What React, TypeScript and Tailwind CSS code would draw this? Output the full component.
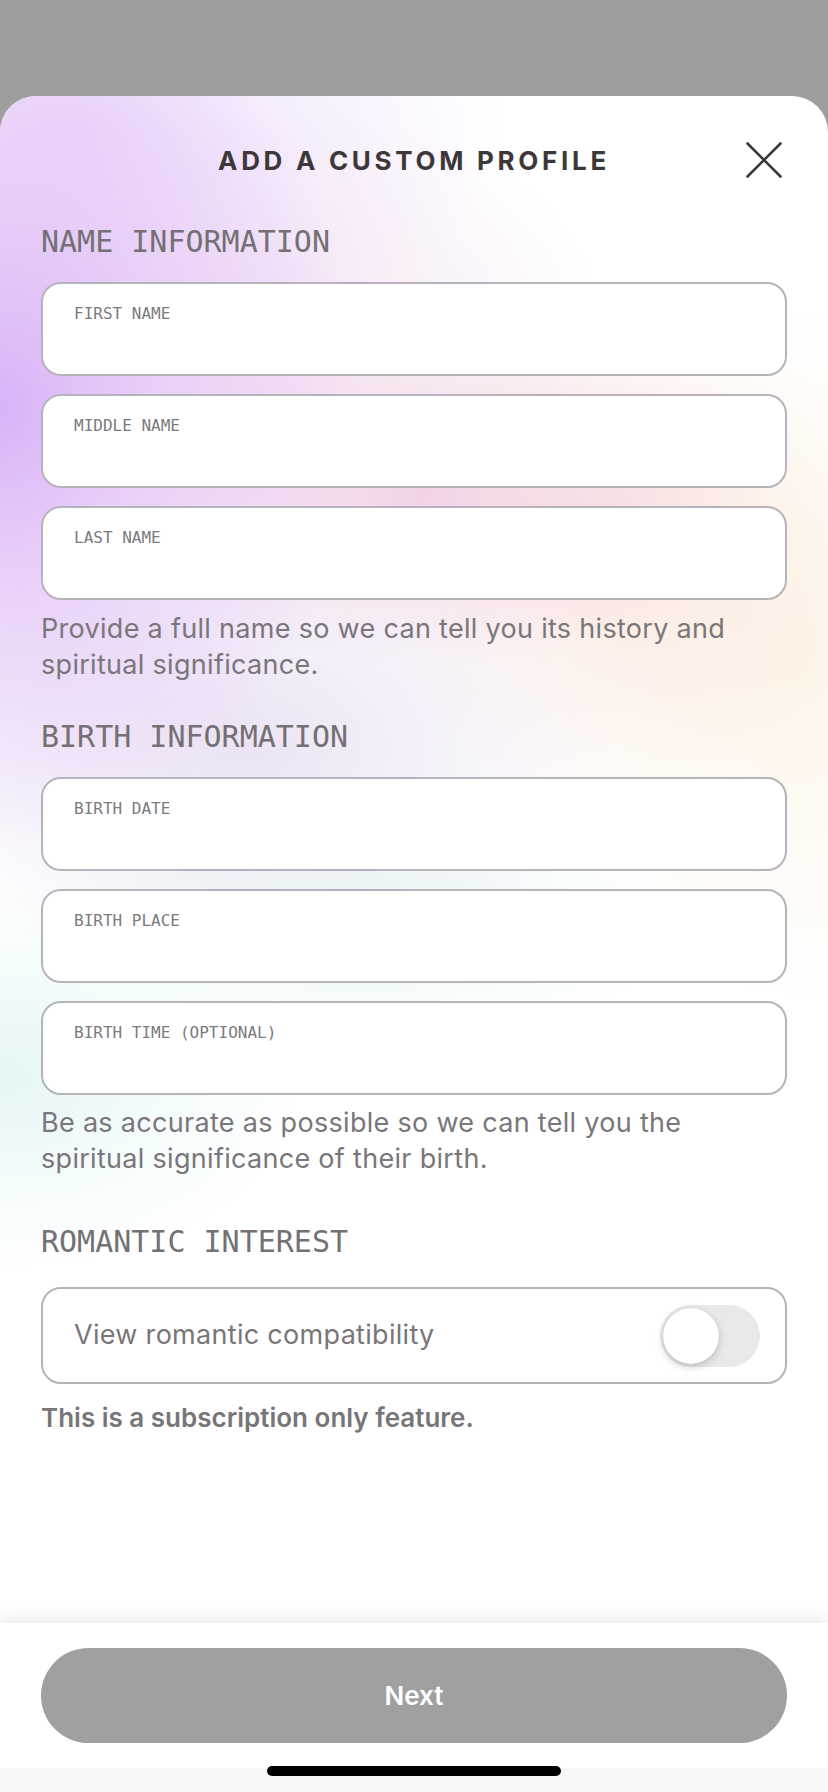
import React from "react";

const mono = "font-['DejaVu_Sans_Mono','Liberation_Mono',monospace]";
const sans = "font-['Inter','Noto_Sans',sans-serif]";

type FieldProps = { label: string };

function Field({ label }: FieldProps) {
  return (
    <div className="h-[94px] rounded-[20px] border-2 border-[#b6b3ba] bg-white pl-[31px] pt-[20px]">
      <span className={`${mono} block text-[16px] leading-[20px] text-[#7b7a7d]`}>{label}</span>
    </div>
  );
}

function SectionTitle({ children, className = "" }: { children: React.ReactNode; className?: string }) {
  return (
    <h2 className={`${mono} text-[30px] leading-[36px] font-normal text-[#747073] ${className}`}>{children}</h2>
  );
}

function Helper({ children, className = "" }: { children: React.ReactNode; className?: string }) {
  return (
    <p className={`${sans} text-[27px] leading-[36px] tracking-[0.3px] text-[#7a767a] ${className}`}>{children}</p>
  );
}

export default function App() {
  return (
    <div className="flex h-[1792px] w-[828px] flex-col bg-[#9e9e9e] pt-[96px]">
      <div className="flex flex-1 flex-col overflow-hidden rounded-t-[36px] bg-white">
        <div className="flex-1 bg-[radial-gradient(ellipse_360px_440px_at_0px_310px,#d9b2f7_0%,rgba(222,186,247,0.6)_45%,rgba(255,255,255,0)_100%),radial-gradient(ellipse_340px_170px_at_420px_400px,rgba(240,204,226,0.85)_0%,rgba(255,255,255,0)_100%),radial-gradient(ellipse_240px_260px_at_620px_450px,rgba(250,228,218,0.8)_0%,rgba(255,255,255,0)_100%),radial-gradient(ellipse_260px_340px_at_800px_560px,rgba(253,244,230,0.95)_0%,rgba(255,255,255,0)_100%),radial-gradient(ellipse_420px_240px_at_80px_30px,rgba(236,218,250,0.9)_0%,rgba(255,255,255,0)_100%),radial-gradient(ellipse_320px_220px_at_280px_230px,rgba(240,218,238,0.7)_0%,rgba(255,255,255,0)_100%),radial-gradient(ellipse_300px_190px_at_0px_980px,rgba(228,246,246,0.95)_0%,rgba(255,255,255,0)_100%),radial-gradient(ellipse_320px_110px_at_360px_830px,rgba(226,243,243,0.85)_0%,rgba(255,255,255,0)_100%),radial-gradient(ellipse_380px_240px_at_240px_650px,rgba(232,222,242,0.85)_0%,rgba(255,255,255,0)_100%)] px-[41px]">
          <div className="relative flex h-[128px] items-center justify-center">
            <h1 className={`${sans} text-[26px] font-bold tracking-[3.7px] text-[#3c3839]`}>ADD A CUSTOM PROFILE</h1>
            <button className="absolute right-[5px] top-[46px] h-[36px] w-[36px]" aria-label="Close">
              <svg viewBox="0 0 36 36" className="h-[36px] w-[36px]" fill="none" stroke="#3c3839" strokeWidth="2.6" strokeLinecap="round">
                <path d="M1.5 1.5 L34.5 34.5" />
                <path d="M34.5 1.5 L1.5 34.5" />
              </svg>
            </button>
          </div>

          <SectionTitle>NAME INFORMATION</SectionTitle>
          <div className="mt-[22px] flex flex-col gap-[18px]">
            <Field label="FIRST NAME" />
            <Field label="MIDDLE NAME" />
            <Field label="LAST NAME" />
          </div>
          <Helper className="mt-[11px]">
            Provide a full name so we can tell you its history and spiritual significance.
          </Helper>

          <SectionTitle className="mt-[36px]">BIRTH INFORMATION</SectionTitle>
          <div className="mt-[22px] flex flex-col gap-[18px]">
            <Field label="BIRTH DATE" />
            <Field label="BIRTH PLACE" />
            <Field label="BIRTH TIME (OPTIONAL)" />
          </div>
          <Helper className="mt-[10px] pr-[40px]">
            Be as accurate as possible so we can tell you the spiritual significance of their birth.
          </Helper>

          <SectionTitle className="mt-[47px]">ROMANTIC INTEREST</SectionTitle>
          <div className="mt-[27px] flex h-[97px] items-center justify-between rounded-[20px] border-2 border-[#b6b3ba] bg-white pl-[31px] pr-[25px]">
            <span className={`${sans} text-[27px] tracking-[0.3px] text-[#79767a]`}>View romantic compatibility</span>
            <div className="flex h-[62px] w-[100px] items-center rounded-full bg-[#e9e9ea] px-[3px]">
              <div className="h-[56px] w-[56px] rounded-full bg-white shadow-[0_3px_8px_rgba(0,0,0,0.18),0_0_1px_rgba(0,0,0,0.15)]" />
            </div>
          </div>
          <p className={`${sans} mt-[14px] text-[26px] font-semibold text-[#77757a]`}>
            This is a subscription only feature.
          </p>
        </div>

        {/* footer */}
        <div className="relative bg-white shadow-[0_-6px_14px_rgba(0,0,0,0.07)]">
          <div className="px-[41px] pb-[25px] pt-[25px]">
            <button className={`${sans} flex h-[95px] w-full items-center justify-center rounded-full bg-[#a0a0a0] text-[26px] font-semibold text-white`}>
              Next
            </button>
          </div>
          <div className="relative h-[24px] bg-[#f8f8f8]">
            <div className="absolute left-[267px] top-[-2px] h-[10px] w-[294px] rounded-full bg-black" />
          </div>
        </div>
      </div>
    </div>
  );
}
